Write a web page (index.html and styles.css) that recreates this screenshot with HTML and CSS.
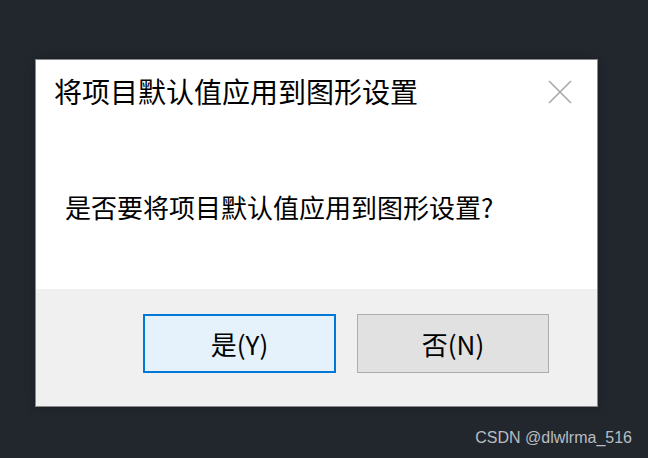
FILE: index.html
```html
<!DOCTYPE html>
<html lang="zh-CN">
<head>
<meta charset="utf-8">
<title>将项目默认值应用到图形设置</title>
<link rel="stylesheet" href="styles.css">
</head>
<body>
  <div class="dialog">
    <div class="titlebar">
      <span class="title">将项目默认值应用到图形设置</span>
      <svg class="close" width="24" height="24" viewBox="0 0 24 24" aria-label="关闭">
        <path d="M1 1 L23 23 M23 1 L1 23" stroke="#a8a8a8" stroke-width="1.6" fill="none"/>
      </svg>
    </div>
    <div class="content">
      <p class="message">是否要将项目默认值应用到图形设置?</p>
    </div>
    <div class="footer">
      <button class="btn btn-primary">是(Y)</button>
      <button class="btn">否(N)</button>
    </div>
  </div>
  <div class="watermark">CSDN @dlwlrma_516</div>
</body>
</html>
```

FILE: styles.css
```css
html, body {
  margin: 0;
  padding: 0;
}
body {
  background: #22272e;
  width: 648px;
  height: 458px;
  position: relative;
  overflow: hidden;
  font-family: "Noto Sans CJK SC", "Noto Sans", sans-serif;
}
.dialog {
  margin: 59px 0 0 35px;
  width: 561px;
  border: 1px solid #8a8a8a;
  background: #ffffff;
  box-shadow: 0 0 10px rgba(0, 0, 0, 0.25);
}
.titlebar {
  display: flex;
  align-items: center;
  justify-content: space-between;
  padding: 17px 25px 0 18px;
}
.title {
  font-size: 28px;
  line-height: 28px;
  color: #000;
}
.close {
  display: block;
  margin-top: 2px;
}
.content {
  padding: 89px 0 69px 29px;
}
.message {
  margin: 0;
  font-size: 26px;
  line-height: 26px;
  color: #000;
}
.footer {
  background: #f0f0f0;
  display: flex;
  justify-content: flex-end;
  gap: 21px;
  padding: 25px 48px 33px 0;
}
.btn {
  box-sizing: border-box;
  width: 192px;
  height: 59px;
  background: #e1e1e1;
  border: 1px solid #adadad;
  font-family: "Noto Sans CJK SC", "Noto Sans", sans-serif;
  font-size: 26px;
  line-height: 26px;
  color: #000;
  padding: 0;
  margin: 0;
}
.btn-primary {
  width: 193px;
  background: #e5f1fb;
  border: 2px solid #0078d7;
}
.watermark {
  position: absolute;
  right: 16px;
  top: 428px;
  font-family: "Liberation Sans", Arial, sans-serif;
  font-size: 16px;
  line-height: 20px;
  color: #b9bdc2;
}
```
